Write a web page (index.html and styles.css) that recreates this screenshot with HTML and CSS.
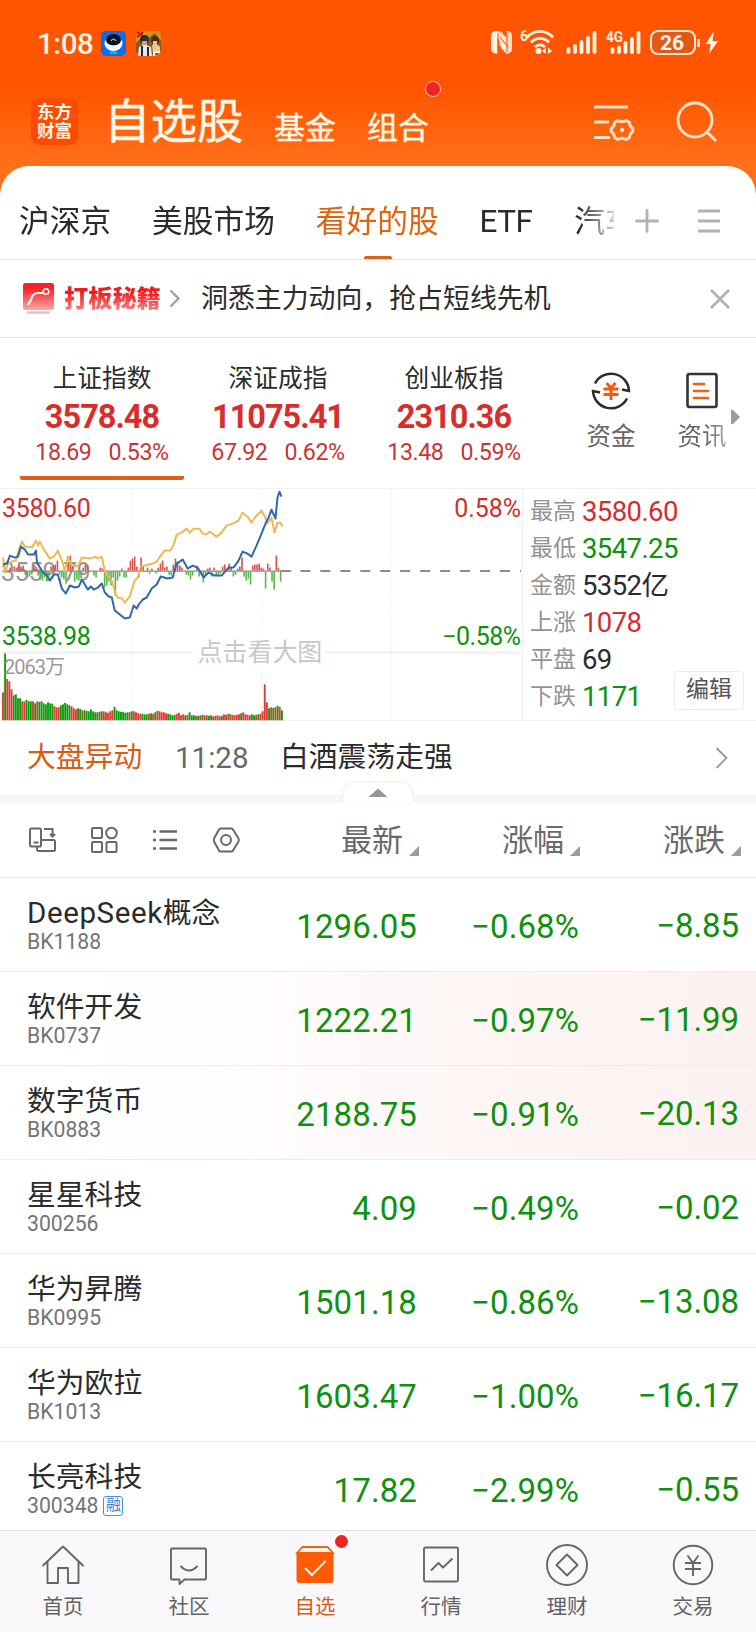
FILE: index.html
```html
<!DOCTYPE html>
<html lang="zh-CN">
<head>
<meta charset="utf-8">
<title>自选股</title>
<link rel="stylesheet" href="styles.css">
</head>
<body>
<div class="app">
  <header class="top">
    <div class="status">
      <span class="clock">1:08</span>
      <svg class="appicon" width="25" height="25" viewBox="0 0 25 25"><rect width="25" height="25" rx="5" fill="#0b6cf0"/><ellipse cx="12.5" cy="12.5" rx="9" ry="7.5" fill="#fff"/><path d="M5 9a7.500 6 0 0 1 15 0c0 7-15 7-15 0z" fill="#06101c"/><path d="M10 10q2.500-4 5 0" fill="none" stroke="#4fb" stroke-width="1.200"/><path d="M8.500 22h3v-2M16.500 22h-3v-2" stroke="#0ce" stroke-width="1.500" fill="none"/></svg>
      <svg class="gameicon" width="25" height="25" viewBox="0 0 25 25"><rect width="25" height="25" rx="5" fill="#d9901c"/><path d="M0 12l6-6 5 2 8-6 6 8v10l-4 4H3l-3-3z" fill="#8a5a24"/><path d="M1 1l6 4M1 6l6-5" stroke="#c11" stroke-width="2"/><path d="M4 9q0-5 4.500-5T13 9l-1 3H5z" fill="#28303c"/><path d="M6 10h5v4H6z" fill="#c9a184"/><path d="M15 10q0-5 4-5t4 5l-1 3h-5z" fill="#4a2d1b"/><path d="M17 10h4v4h-4z" fill="#ecc198"/><path d="M2 25l1-9 4-2h3l5 2 1 9z" fill="#e8e8ec"/><path d="M6 15v10M12 16v9" stroke="#222b38" stroke-width="2"/><path d="M16 14h6l2 2v5l-7 1z" fill="#f0c890"/><path d="M18 25v-4h6" stroke="#fff" stroke-width="2" fill="none"/></svg>
      <svg class="sysicons" width="230" height="30" viewBox="490 28 230 30">
        <path fill="#fff4e6" d="M495 31h3.500l9 13v9.500l-6-5V44l-4-6v15.500H495q-4-1-4-5v-12q0-4.500 4-5.500z"/>
        <path fill="#fff4e6" d="M501 31l5.500 7V31h1.500q4 .5 4 5v12.500q0 4.500-4 5h-2l-7-9V41l6 8v-6l-6-8z" opacity=".85"/>
        <path d="M498 33v20M500 37l8 10M507 32v20" stroke="#f50" stroke-width="1.100" fill="none"/>
        <text x="520" y="41" class="tiny" font-size="14">6</text>
        <g fill="none" stroke="#fff4e6" stroke-width="2.800"><path d="M527 37.500a17 17 0 0 1 26 0"/><path d="M531 42.500a12 12 0 0 1 18 0"/><path d="M535 47a7 7 0 0 1 10 0"/></g>
        <circle cx="538.500" cy="51" r="3" fill="#fff4e6"/><path fill="#fff4e6" d="M542 51l4-3.500v6.500zM552 51l-4-3.500v6.500z"/>
        <g stroke="#fff4e6" stroke-width="3.800" stroke-linecap="round"><path d="M568.500 52v-3M575 52v-6M581.500 52v-10M588 52v-14M594.500 52V33"/><path d="M612.500 52v-3M619 52v-4.500M625.500 52v-9M632 52v-13M638.500 52V33"/></g>
        <text x="606" y="42" class="tiny" font-size="14" textLength="17" lengthAdjust="spacingAndGlyphs">4G</text>
        <rect x="651" y="31" width="44" height="23" rx="7" fill="#e05a16" stroke="#ffe9d4" stroke-width="2"/>
        <text x="660" y="50" class="tiny" font-size="21" textLength="24">26</text>
        <path d="M698.500 39v8" stroke="#ffe9d4" stroke-width="2.500"/>
        <path d="M714 31l-8.500 13h5l-1.500 10 9-13h-5.500z" fill="#fff4e6"/>
      </svg>
    </div>
    <div class="titlebar">
      <div class="logo"><span>东方</span><span>财富</span></div>
      <span class="title">自选股</span>
      <span class="sub sub-fund">基金</span>
      <span class="sub sub-combo">组合<i class="dot"></i></span>
      <svg class="filter" width="42" height="38" viewBox="0 0 42 38" fill="none" stroke="#ffe2cb" stroke-width="2.800"><path d="M1 4h34M1 19h15M1 34.500h16"/><path d="M24.800 17.500q4.200 2.500 8.400 0l3.300 2q0 4.200 3.300 6v3q-3.300 1.800-3.300 6l-3.300 2q-4.200-2.500-8.400 0l-3.300-2q0-4.200-3.300-6v-3q3.300-1.800 3.300-6z" stroke-linejoin="round"/><circle cx="29" cy="27" r="1.800" fill="#ffe2cb" stroke-width="1"/></svg>
      <svg class="search" width="42" height="42" viewBox="0 0 42 42" fill="none" stroke="#ffe2cb" stroke-width="2.900"><circle cx="19" cy="19" r="17"/><path d="M31 31l9 9"/></svg>
    </div>
  </header>

  <main class="sheet">
    <nav class="tabs">
      <div class="tablist">
        <span>沪深京</span><span>美股市场</span><span class="active">看好的股</span><span class="etf">ETF</span><span class="last">汽车</span>
      </div>
      <svg width="24" height="24" viewBox="0 0 24 24" stroke="#b2b2b2" stroke-width="2.800" stroke-linecap="round"><path d="M1.500 12h21M12 1.500v21"/></svg>
      <svg class="menu" width="22" height="24" viewBox="0 0 22 24" stroke="#b2b2b2" stroke-width="2.800"><path d="M0 2h22M0 12h22M0 22h22"/></svg>
    </nav>

    <section class="promo">
      <svg width="32" height="33" viewBox="0 0 32 33"><defs><linearGradient id="pg" x1="0" y1="0" x2="0" y2="1"><stop offset=".2" stop-color="#f5222a"/><stop offset="1" stop-color="#fba5a5"/></linearGradient></defs><rect x="0" y="1" width="31" height="27" rx="2.500" fill="url(#pg)"/><path d="M5 22c4-1 2-11 10-11h5" fill="none" stroke="#fff" stroke-width="2.200" stroke-linecap="round"/><circle cx="23" cy="9.500" r="2.800" fill="none" stroke="#fff" stroke-width="1.600"/><path d="M4 30.500h23" stroke="#fcb9b9" stroke-width="2.500"/></svg>
      <b>打板秘籍</b>
      <svg class="arrow" width="11" height="19" viewBox="0 0 11 19" fill="none" stroke="#a0a0a0" stroke-width="2.400"><path d="M1.500 1.500l8 8-8 8"/></svg>
      <span class="msg">洞悉主力动向，抢占短线先机</span>
      <svg class="close" width="20" height="20" viewBox="0 0 20 20" stroke="#b0b0b0" stroke-width="2.600"><path d="M1 1l18 18M19 1L1 19"/></svg>
    </section>

    <section class="indices">
      <div class="idx on"><span class="n">上证指数</span><b>3578.48</b><span class="d"><i>18.69</i><i>0.53%</i></span></div>
      <div class="idx"><span class="n">深证成指</span><b>11075.41</b><span class="d"><i>67.92</i><i>0.62%</i></span></div>
      <div class="idx"><span class="n">创业板指</span><b>2310.36</b><span class="d"><i>13.48</i><i>0.59%</i></span></div>
      <div class="quick">
        <svg width="40" height="40" viewBox="0 0 40 40" fill="none"><g stroke="#2c2c2c" stroke-width="2.500"><path d="M4 12.500A18 18 0 0 1 38 20l-7-1.500"/><path d="M36 27.500A18 18 0 0 1 2 20l7 1.500"/></g><path d="M15.500 12l4.500 5 4.500-5M12.500 18h15M12.500 23.500h15M20 17v12" stroke="#ee5c0c" stroke-width="3"/></svg>
        <span>资金</span>
      </div>
      <div class="quick news">
        <svg width="32" height="40" viewBox="0 0 32 40" fill="none"><rect x="1.500" y="3" width="29" height="33" rx="2" stroke="#333" stroke-width="2.600"/><path d="M8 13h10M8 20h14M8 27h14" stroke="#ee6212" stroke-width="2.700" stroke-linecap="round"/></svg>
        <span>资讯</span>
      </div>
      <svg class="more" width="10" height="16" viewBox="0 0 10 16"><path d="M0 2q0-2 2-1l7 7-7 7q-2 1-2-1z" fill="#9c9c9c"/></svg>
    </section>

    <section class="market">
      <svg class="chart" id="chart" width="523" height="232" viewBox="0 488.500 523 232">
        <g stroke="#ebebee" stroke-width="1" stroke-dasharray="1.500 2"><path d="M132.500 489v231M262.500 489v231M392.500 489v231"/></g>
        <g stroke="#f0f0f2" stroke-width="2"><path d="M2 652h191M326 652h196"/></g>
        <text x="1" y="580" class="tx" font-size="25" textLength="90" fill="#979797">3559.79</text>
        <path d="M2 570.500h290" stroke="#8a8a8a" stroke-width="1.200"/>
        <g id="ticks"></g>
        <path d="M281 570.500h241" stroke="#8c8c8c" stroke-width="2" stroke-dasharray="10 10"/>
        <polyline fill="none" stroke="#edb952" stroke-width="2" stroke-linejoin="round" points="3,557 5,572 8,563 12,561 16,560 19,549 22,541 25,546 32,547 36,540 38,545 40,541 44,549 50,558 55,555 58,550 62,560 65,571 68,556 72,565 78,566 82,557 90,558 96,556 98,558 102,556 105,571 112,580 116,594 118,597 122,598 125,602 130,596 135,580 138,577 141,566 145,565 149,564 153,563 157,561 161,555 165,550 171,550 174,544 177,534 182,532 187,528 190,532 194,528 200,528 203,533 207,534 210,531 217,536 222,532 227,525 233,523 239,520 243,512 248,516 252,522 257,515 262,510 265,515 268,523 272,517 275,532 278,522 281,522 283,526"/>
        <polyline fill="none" stroke="#3168a8" stroke-width="2" stroke-linejoin="round" points="3,564 7,563 10,555 15,557 18,556 21,546 25,549 28,554 34,554 36,550 37,562 43,572 47,575 50,580 54,574 58,574 62,588 66,593 70,585 75,587 79,586 82,579 88,589 91,586 94,589 98,587 102,583 105,592 109,596 112,597 115,610 120,614 125,618 130,617 134,605 137,608 139,604 143,599 147,597 152,588 157,584 161,576 168,578 173,577 177,563 183,559 188,568 193,565 198,567 204,577 209,572 215,575 222,575 229,567 234,567 239,560 243,551 248,553 252,556 257,545 262,533 266,523 269,517 272,509 276,518 278,497 280,491 282,496"/>
        <g id="volume"></g>
        <text x="2" y="516.500" class="tx" font-size="25" textLength="89" fill="#d02e2e">3580.60</text>
        <text x="2" y="645" class="tx" font-size="25" textLength="89" fill="#109010">3538.98</text>
        <text x="455" y="516.500" class="tx" font-size="25" textLength="67" fill="#d02e2e">0.58%</text>
        <text x="443" y="645" class="tx" font-size="25" textLength="79" fill="#109010">−0.58%</text>
        <text x="4" y="674" class="tx" font-size="20" textLength="61" fill="#999">2063万</text>
        <text x="198" y="661" class="tx" font-size="25" fill="#c8c8c8">点击看大图</text>
      </svg>
      <div class="stats">
        <div class="stat"><span>最高</span><b class="up">3580.60</b></div>
        <div class="stat"><span>最低</span><b class="down">3547.25</b></div>
        <div class="stat"><span>金额</span><b>5352亿</b></div>
        <div class="stat"><span>上涨</span><b class="up">1078</b></div>
        <div class="stat"><span>平盘</span><b>69</b></div>
        <div class="stat"><span>下跌</span><b class="down">1171</b></div>
        <button class="edit">编辑</button>
      </div>
    </section>

    <section class="alert">
      <span class="tag">大盘异动</span><span class="time">11:28</span><span class="news-title">白酒震荡走强</span>
      <svg width="13" height="22" viewBox="0 0 13 22" fill="none" stroke="#999" stroke-width="1.900"><path d="M1.500 1l10 10-10 10"/></svg>
      <svg class="notch" width="74" height="22" viewBox="0 0 74 22"><path d="M1 21L3 8q2-7 10-7h48q8 0 10 7l2 13" fill="#fff" stroke="#eff0f2" stroke-width="1.200"/><path d="M27.500 16l9.500-8.500L46.500 16z" fill="#979797"/></svg>
    </section>

    <section class="cols">
      <div class="tools">
        <svg width="27" height="26" viewBox="0 0 27 26" fill="none" stroke="#68686b" stroke-width="2"><path d="M12 12V3q0-1.500-1.500-1.500h-8Q1 1.500 1 3v15q0 1.500 1.500 1.500H12"/><path d="M4.500 15.500h5"/><path d="M8 20v2.500q0 1.500 1.500 1.500h15q1.500 0 1.500-1.500v-8q0-1.500-1.500-1.500H12v6.500M15 2h8.500v7M21 7l2.500 2.500L26 7"/></svg>
        <svg width="27" height="28" viewBox="0 0 27 28" fill="none" stroke="#68686b" stroke-width="2"><rect x="1" y="2" width="10" height="10" rx="1"/><circle cx="20.500" cy="7" r="5.300"/><rect x="1" y="16" width="10" height="10" rx="1"/><rect x="15.500" y="16" width="10" height="10" rx="1"/></svg>
        <svg width="25" height="22" viewBox="0 0 25 22" fill="none" stroke="#68686b" stroke-width="2.400"><path d="M0 2.500h3M0 11h3M0 19.500h3M6.500 2.500H24M6.500 11H24M6.500 19.500H24"/></svg>
        <svg width="27" height="26" viewBox="0 0 27 26" fill="none" stroke="#68686b" stroke-width="2"><path d="M7.500 1.500h11q1 0 1.500 1l5.500 9q.6 1.500 0 3l-5.500 9q-.5 1-1.500 1h-11q-1 0-1.500-1l-5-9q-.6-1.500 0-3l5-9q.5-1 1.500-1z"/><circle cx="13" cy="13" r="5"/></svg>
      </div>
      <span class="h">最新<i></i></span><span class="h">涨幅<i></i></span><span class="h">涨跌<i></i></span>
    </section>

    <section class="list">
      <div class="row"><div class="name"><span><u>DeepSeek</u>概念</span><small>BK1188</small></div><b class="c1">1296.05</b><b class="c2">−0.68%</b><b class="c3">−8.85</b></div>
      <div class="row hot"><div class="name"><span>软件开发</span><small>BK0737</small></div><b class="c1">1222.21</b><b class="c2">−0.97%</b><b class="c3">−11.99</b></div>
      <div class="row hot"><div class="name"><span>数字货币</span><small>BK0883</small></div><b class="c1">2188.75</b><b class="c2">−0.91%</b><b class="c3">−20.13</b></div>
      <div class="row"><div class="name"><span>星星科技</span><small>300256</small></div><b class="c1">4.09</b><b class="c2">−0.49%</b><b class="c3">−0.02</b></div>
      <div class="row"><div class="name"><span>华为昇腾</span><small>BK0995</small></div><b class="c1">1501.18</b><b class="c2">−0.86%</b><b class="c3">−13.08</b></div>
      <div class="row"><div class="name"><span>华为欧拉</span><small>BK1013</small></div><b class="c1">1603.47</b><b class="c2">−1.00%</b><b class="c3">−16.17</b></div>
      <div class="row"><div class="name"><span>长亮科技</span><small>300348<em>融</em></small></div><b class="c1">17.82</b><b class="c2">−2.99%</b><b class="c3">−0.55</b></div>
    </section>
  </main>

  <footer class="nav">
    <a><svg width="44" height="44" viewBox="0 0 44 44" class="ln"><path d="M1.500 24L22 4.500 42.500 24M6.500 20v21h10.500V26h10v15h10.500V20" /></svg>首页</a>
    <a><svg width="44" height="44" viewBox="0 0 44 44" class="ln"><path d="M5 6.500h33q1 0 1 1v29q0 1-1 1H17.500l-5 4.500v-4.500H5q-1 0-1-1v-29q0-1 1-1z"/><path d="M13.500 24q8.500 9 17 0" /></svg>社区</a>
    <a class="cur"><svg width="44" height="44" viewBox="0 0 44 44"><path d="M4 11L9.500 5h25L40 11z" fill="#fff1e6" stroke="#e8651c" stroke-width="1.800"/><path d="M3.500 10.500h37V38q0 3-3 3h-31q-3 0-3-3z" fill="#ff5a08"/><path d="M12 26l7 7 13.500-14" fill="none" stroke="#fff0e0" stroke-width="2"/></svg>自选<i class="reddot"></i></a>
    <a><svg width="44" height="44" viewBox="0 0 44 44" class="ln"><rect x="5" y="5.500" width="34" height="34" rx="1.500"/><path d="M12 28.500l7.500-7.500 4.500 4.500 9.500-9"/></svg>行情</a>
    <a><svg width="44" height="44" viewBox="0 0 44 44" class="ln"><circle cx="22" cy="23" r="20"/><path d="M22 12.500L32.500 23 22 33.500 11.500 23z"/></svg>理财</a>
    <a><svg width="44" height="44" viewBox="0 0 44 44" class="ln"><circle cx="22" cy="23" r="19.300"/><path d="M16.500 13.500l5.500 7.500 5.500-7.500M14 21h16M14 27h16M22 21v13"/></svg>交易</a>
  </footer>
</div>
<script src="chart.js"></script>
</body>
</html>
```

FILE: chart.js
```js
const NS = "http://www.w3.org/2000/svg";

function bar(parent, x, y, h, w, color) {
  const r = document.createElementNS(NS, "rect");
  r.setAttribute("x", x);
  r.setAttribute("y", y);
  r.setAttribute("width", w);
  r.setAttribute("height", h);
  r.setAttribute("fill", color);
  parent.appendChild(r);
}

const STEP = 2.15;
const RED = "#df3b36";
const GREEN = "#109c10";

// Traded volume per interval, in pixels.
const volume = [28, 67, 41.5, 39, 31, 25, 26, 22, 22, 19, 19, 20.500, 19, 19, 19, 17, 19, 18.500, 19, 17, 16, 18, 17, 16.500,
  14, 13, 13, 15, 16, 17.500, 16, 15, 14, 12, 11, 12, 11.500, 10, 10, 9.500, 9, 11, 9, 8, 8, 8.500, 9, 9, 8, 7.500, 9, 10, 13.500,
  10, 9, 8.500, 8.500, 7.500, 8, 8, 9, 9, 8, 7, 6.500, 6.500, 6, 6, 6.500, 7, 6.500, 8, 9.500, 9, 8, 8, 7, 6.500, 6, 5, 5.500, 6.500, 7.500, 5,
  6, 5, 5.500, 8, 5, 5, 4.500, 4.500, 5, 5.500, 5, 5, 4.500, 5, 4, 4.500, 5, 4, 4.500, 6, 5.500, 6.500, 6, 5.500, 5, 5.500, 6, 7, 8, 6,
  5.500, 5, 6, 5, 5.500, 6, 6.500, 9, 36, 18, 12, 13, 12.500, 13, 14.500, 13.500, 10];
const side = "rgrrrggggrrgggrgrgggggggrrrgggggrrrggrgggggggrgrrrrrgggggggrgrrrrgggrgrgrrrrrggggrrrrgrgggrgrgrrggrrrrgrrrgrrrrgrrrrggrgrrrrgrgrgrg";
const vol = document.getElementById("volume");
volume.forEach((h, i) => bar(vol, 2 + i * STEP, 720 - h, h, 1.9, side[i] === "g" ? GREEN : RED));

// Momentum bars around the previous close: positive is above the line.
const momentum = [0, 0, 0, 3, 1, 4, 3, 6, 4, 5, -3, -6, -5, -3, 6, 4, -4, -8, -9, -6, -10, -5, 4, 5, 6, 10, -3, -6, -8, -12,
  7, 15, 5, -10, -8, -9, -7, 3, 6, 5, 0, 0, -4, -6, 0, 3, 2, -16, -14, -10, -14, -6, -24, -9, -5, 2, -6, -6, 3, 10, 12, 14, 4, -6,
  13, 4, 0, 3, -2, 2, 0, -2, 3, 7, 10, 3, 4, -3, -4, 6, 12, 9, 5, 3, 0, -3, -4, -8, -4, 0, 5, -5, -3, -11, -4, 2, 3, -5, 3, -4,
  -3, -2, 4, 6, 2, 7, 3, -5, -3, 2, 4, 13, -5, -9, -7, -13, 5, 6, 6, 7, 3, 2, -17, 7, 3, -10, -18, 15, 3, -10];
const ticks = document.getElementById("ticks");
momentum.forEach((v, i) => {
  if (v) bar(ticks, 3 + i * STEP, v > 0 ? 570 - v : 571, Math.abs(v), 1.6, v > 0 ? "#d9504c" : "#5cb350");
});
```

FILE: styles.css
```css
* { box-sizing: border-box; }
body { margin: 0; font-family: Roboto, "Noto Sans CJK SC", sans-serif; color: #2b2b2b; background: #fff; }
i, em { font-style: normal; }
u { text-decoration: none; }
svg { display: block; flex: none; }
.app { width: 756px; height: 1632px; display: flex; flex-direction: column; overflow: hidden; background: linear-gradient(#f50 0, #f50 88px, #ff7019 166px, #ff6c15 200px); }

.top { height: 166px; flex: none; }
.status { height: 86px; display: flex; align-items: center; padding: 0 36px 0 37px; }
.clock { font-size: 29.5px; line-height: 30px; width: 64px; color: #fff4e6; letter-spacing: -.4px; font-weight: 500; padding-top: 1px; }
.gameicon { margin-left: 10px; }
.sysicons { margin-left: auto; }
.tiny { font-weight: 700; fill: #fff4e6; }
.titlebar { height: 80px; display: flex; padding-left: 31px; color: #fff7e8; }
.logo { width: 47px; height: 47px; margin-top: 12px; border-radius: 9px; background: #ff4a04; display: flex; flex-direction: column; align-items: center; justify-content: center; font-size: 17.5px; line-height: 19px; font-weight: 700; }
.title { font-size: 46.5px; line-height: 60px; margin: 6px 0 0 26px; width: 140px; font-weight: 400; -webkit-text-stroke: .4px; white-space: nowrap; }
.sub { font-size: 31px; line-height: 40px; margin-top: 23px; font-weight: 400; -webkit-text-stroke: .4px; position: relative; }
.sub-fund { margin-left: 30px; width: 62px; }
.sub-combo { margin-left: 31px; width: 62px; }
.dot { position: absolute; width: 16px; height: 16px; right: -12px; top: -28px; border-radius: 50%; background: #ee2424; border: 1.5px solid #ffc3ac; }
.filter { margin: 17px 0 0 164px; }
.search { margin: 15px 0 0 41px; }

.sheet { background: #fff; border-radius: 29px 29px 0 0; flex: 1; min-height: 0; display: flex; flex-direction: column; overflow: hidden; }
.tabs { height: 94px; flex: none; display: flex; align-items: center; border-bottom: 1.5px solid #e4e4e6; padding: 15px 36px 0 20px; }
.tablist { display: flex; width: 595px; height: 78px; align-items: center; overflow: hidden; font-size: 30.7px; line-height: 78px; padding-top: 3px; white-space: nowrap; gap: 41px; margin-left: -1px; -webkit-mask-image: linear-gradient(90deg, #000 94%, transparent 101.5%); }
.tablist .etf { font-size: 31.5px; letter-spacing: -.6px; }
.tablist .last { margin-left: 1px; }
.active { color: #e2620f; position: relative; }
.active::after { content: ""; position: absolute; left: 48px; bottom: 1px; width: 28px; height: 4px; border-radius: 2px; background: #dc6120; }
.tabs > svg { margin-top: 1px; }
.tabs > svg:first-of-type { margin-left: 21px; }
.tabs .menu { margin-left: 39px; }

.promo { height: 78px; flex: none; display: flex; align-items: center; border-bottom: 1.5px solid #e4e4e6; padding: 0 26px 0 23px; }
.promo b { margin-left: 9px; width: 98px; font-size: 24.2px; line-height: 32px; font-weight: 900; color: transparent; background: linear-gradient(#f01c20 30%, #f9898b 90%); -webkit-background-clip: text; background-clip: text; white-space: nowrap; }
.arrow { margin-left: 7px; }
.msg { margin-left: 21px; font-size: 26.9px; line-height: 40px; }
.close { margin-left: auto; }

.indices { height: 149.500px; flex: none; display: flex; padding-left: 20px; }
.idx { width: 164px; margin-right: 12px; display: flex; flex-direction: column; align-items: center; padding-top: 23px; height: 142px; white-space: nowrap; }
.on { border-bottom: 4px solid #dc6120; border-radius: 0 0 2px 2px; }
.n { font-size: 24.7px; line-height: 35px; }
.idx b { font-size: 32.5px; line-height: 38px; color: #d92c2c; letter-spacing: -1px; margin-top: 2px; }
.d { display: flex; gap: 17px; font-size: 23.2px; line-height: 30px; color: #c93434; letter-spacing: -.4px; margin-top: 1px; }
.quick { display: flex; flex-direction: column; align-items: center; width: 50px; margin-left: 38px; padding-top: 33px; font-size: 24.5px; line-height: 36px; color: #666; white-space: nowrap; }
.quick span { margin-top: 8px; }
.news { margin-left: 41px; }
.news span { color: transparent; background: linear-gradient(90deg, #666 55%, #aaa); -webkit-background-clip: text; background-clip: text; }
.more { margin: 71px 0 0 4px; }

.market { height: 233.500px; flex: none; display: flex; border-top: 1.5px solid #f0f1f3; border-bottom: 1.5px solid #f0f1f3; }
.chart { border-right: 1.5px solid #eee; }
.tx { font-family: Roboto, "Noto Sans CJK SC", sans-serif; }
.stats { position: relative; flex: 1; padding: 4px 0 0 7px; }
.stat { height: 37.2px; line-height: 37.2px; display: flex; font-size: 23px; color: #929292; }
.stat span { width: 52px; }
.stat b { font-weight: 400; font-size: 27.5px; letter-spacing: -.6px; color: #2b2b2b; }
.stat .up { color: #d02e2e; }
.stat .down { color: #109010; }
.edit { position: absolute; right: 12px; top: 182px; width: 70px; height: 39px; border: 1.5px solid #ebebed; border-radius: 4px; background: #fff; font: 23px/34px Roboto, "Noto Sans CJK SC", sans-serif; color: #555; padding: 0; }

.alert { height: 82px; flex: none; border-bottom: 8px solid #f5f6f9; display: flex; align-items: center; padding: 0 28px 0 27px; font-size: 28.8px; line-height: 40px; position: relative; }
.tag { color: #d85c14; width: 148px; margin-top: -3px; }
.time { color: #686868; width: 105px; font-size: 29.5px; }
.news-title { margin-top: -3px; }
.alert > svg:first-of-type { margin-left: auto; }
.notch { position: absolute; left: 341px; bottom: -8px; }

.cols { height: 75px; flex: none; display: flex; align-items: center; border-bottom: 1.5px solid #e9e9eb; padding-left: 29px; color: #6a6a6c; }
.tools { display: flex; align-items: center; gap: 35px; width: 312px; flex: none; }
.h { font-size: 31px; line-height: 74px; width: 161px; flex: none; display: flex; padding-top: 1px; }
.h i { width: 0; height: 0; border-left: 10px solid transparent; border-bottom: 10px solid #9c9ca0; margin: 42px 0 0 6px; }

.row { height: 94px; display: flex; border-bottom: 1.5px solid #ececee; padding-left: 27px; }
.hot { background: linear-gradient(90deg, #fff 8%, #fffcfc 35%, #fdf6f5 65%, #fcf1f0); }
.name { width: 230px; padding-top: 15px; font-size: 28.8px; line-height: 40px; display: flex; flex-direction: column; white-space: nowrap; }
.name u { font-size: 29.5px; letter-spacing: .6px; }
small { font-size: 21.2px; line-height: 22px; color: #747474; letter-spacing: 0; margin-top: -2px; display: flex; align-items: center; }
em { margin-left: 5px; border: 1.5px solid #4b8fd0; border-radius: 3px; font-size: 15px; line-height: 17px; width: 20px; height: 20px; text-align: center; color: #3e86cc; }
.row b { font-weight: 400; font-size: 33px; line-height: 98px; color: #109010; text-align: right; letter-spacing: .1px; }
.c1 { width: 160px; }
.c2 { width: 162px; }
.row .c3 { width: 160px; line-height: 95px; letter-spacing: -.1px; }

.nav { height: 102px; flex: none; background: #f8f8fa; border-top: 1.5px solid #e3e3e5; display: flex; color: #626264; font-size: 20.5px; }
.nav a { width: 126px; display: flex; flex-direction: column; align-items: center; padding-top: 11px; line-height: 42px; position: relative; }
.nav .cur { color: #d85c14; }
.ln { fill: none; stroke: #666; stroke-width: 1.9; stroke-linejoin: round; }
.reddot { position: absolute; width: 13px; height: 13px; border-radius: 50%; background: #ee2424; left: 83px; top: 4px; }
```
